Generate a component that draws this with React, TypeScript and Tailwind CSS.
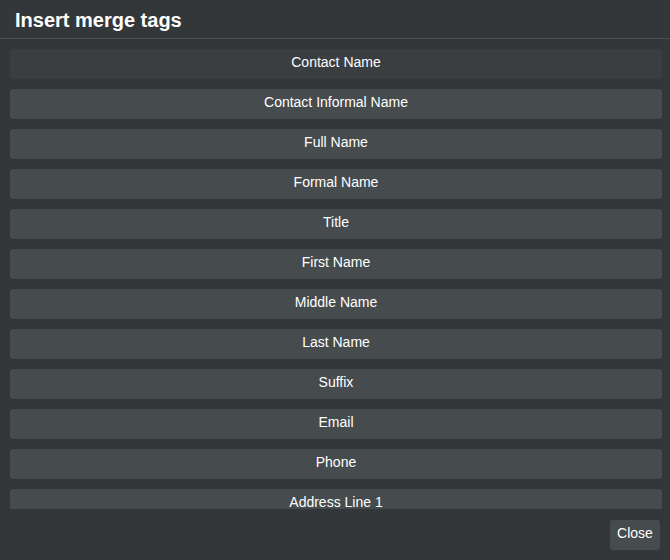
const tags = [
  "Contact Name",
  "Contact Informal Name",
  "Full Name",
  "Formal Name",
  "Title",
  "First Name",
  "Middle Name",
  "Last Name",
  "Suffix",
  "Email",
  "Phone",
  "Address Line 1",
]

export default function App() {
  return (
    <div
      className="flex h-[560px] w-[670px] flex-col bg-[#33373a] text-white"
      style={{ fontFamily: '"Liberation Sans", Arial, sans-serif' }}
    >
      <div className="flex h-[39px] shrink-0 items-center border-b border-[#4a4f52] px-[15px] pt-[1px]">
        <h2 className="text-[20px] font-bold leading-none">Insert merge tags</h2>
      </div>
      <div className="flex min-h-0 flex-1 flex-col gap-[10px] overflow-hidden pl-[10px] pr-[8px] pt-[10px]">
        {tags.map((tag, i) => (
          <button
            key={tag}
            className={`h-[30px] shrink-0 rounded-[3px] pb-[3px] text-[14px] text-white ${
              i === 0 ? "bg-[#3a3e41]" : "bg-[#464b4e]"
            }`}
          >
            {tag}
          </button>
        ))}
      </div>
      <div className="flex h-[51px] shrink-0 items-center justify-end bg-[#33373a] pr-[10px]">
        <button className="h-[30px] w-[50px] rounded-[3px] pb-[2px] text-[14px] text-white bg-[#464b4e]">
          Close
        </button>
      </div>
    </div>
  )
}
